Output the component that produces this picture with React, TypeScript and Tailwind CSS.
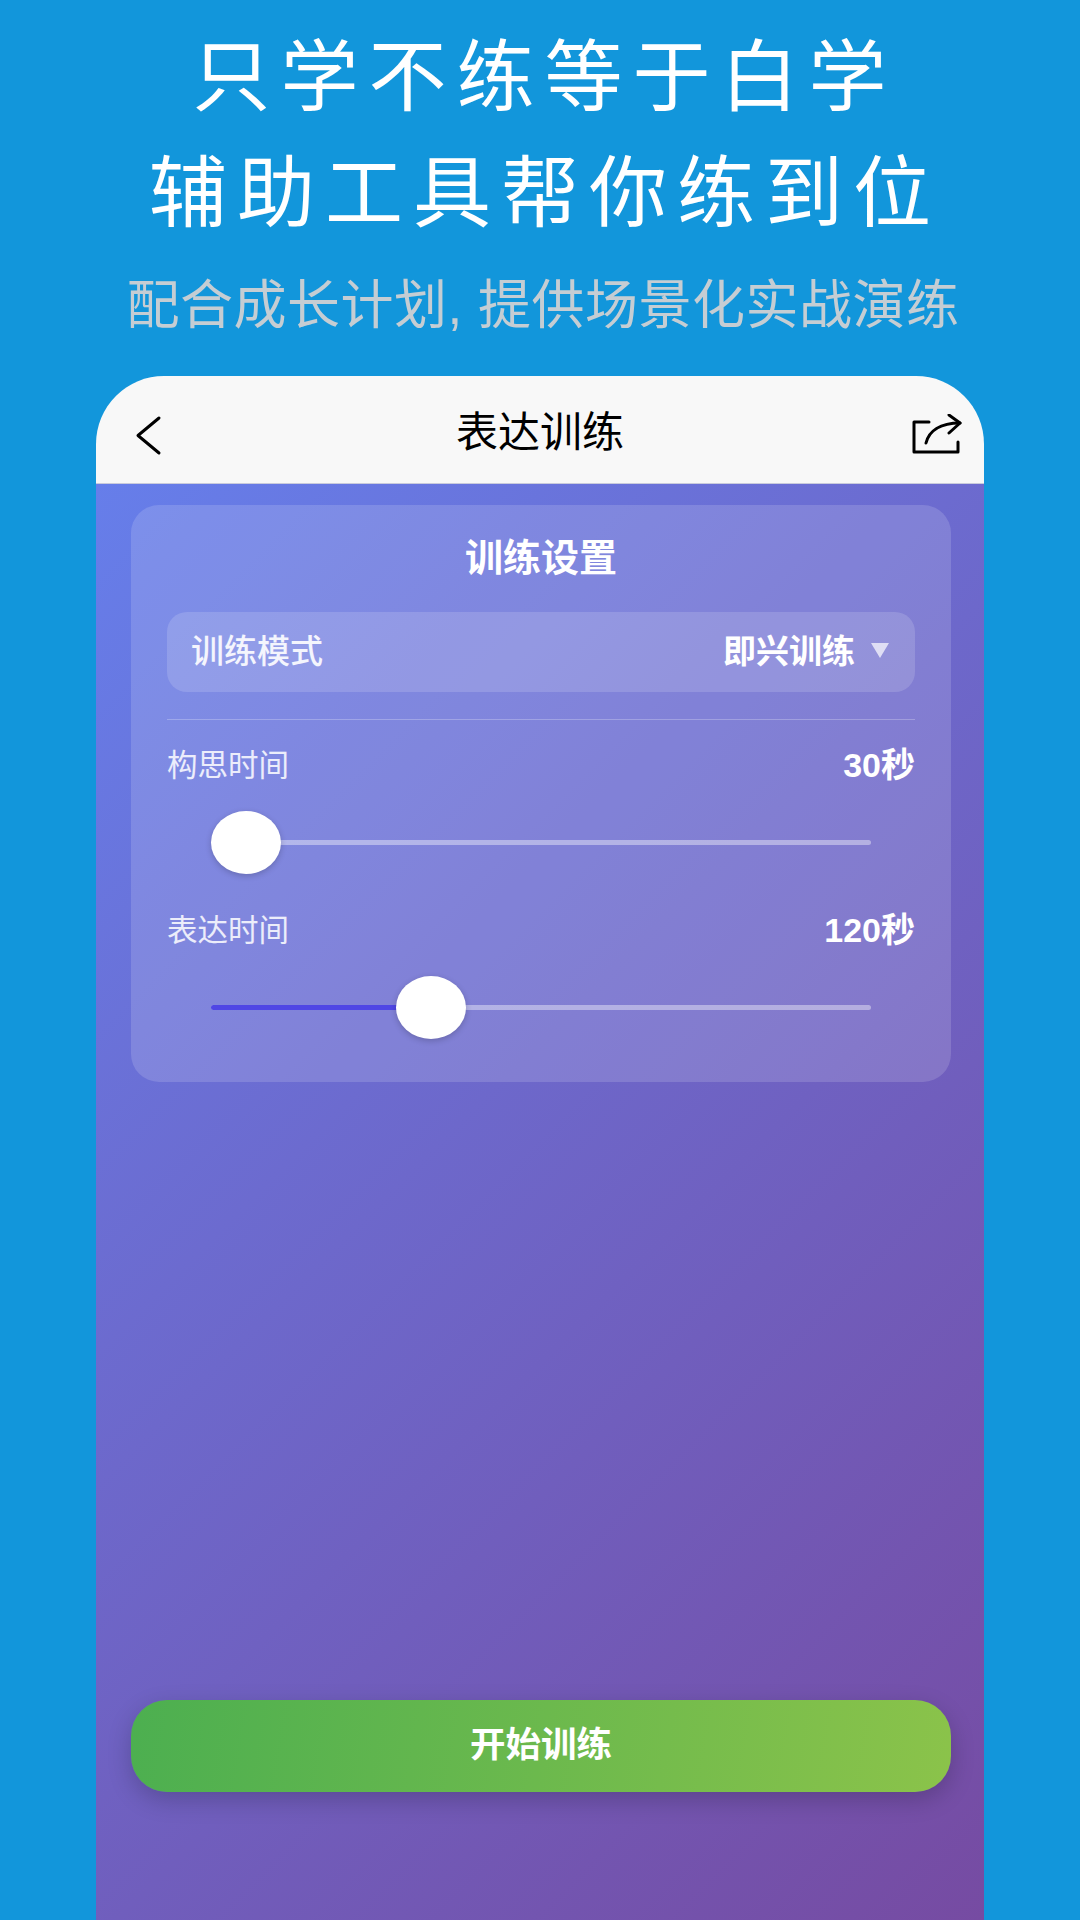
const cjk = "font-['Liberation_Sans','Noto_Sans_CJK_SC',sans-serif]";

function Slider({ label, value, thumbLeft, fill }: { label: string; value: string; thumbLeft: number; fill?: number }) {
  return (
    <div className="flex flex-col">
      <div className="flex h-[40px] items-center justify-between">
        <span className="text-[30.5px] leading-[40px] text-white/85">{label}</span>
        <span className="text-[34px] leading-[40px] font-bold text-white">{value}</span>
      </div>
      <div className="mt-[26px] flex h-[63px] items-center px-[44px]">
        <div className="relative h-[5px] w-full rounded-full bg-white/40">
          {fill ? <div className="h-full rounded-full bg-[#4f46e5]" style={{ width: fill }} /> : null}
          <div
            className="absolute top-[-29px] h-[63px] w-[70px] rounded-[50%] bg-white shadow-[0_2px_6px_rgba(0,0,0,0.2)]"
            style={{ left: thumbLeft }}
          />
        </div>
      </div>
    </div>
  );
}

export default function App() {
  return (
    <div className={`flex h-[1920px] w-[1080px] flex-col overflow-hidden bg-[#1296db] ${cjk}`}>
      <div className="flex h-[376px] flex-col items-center">
        <div className="mt-[28px] h-[116px] pl-[9px] text-[78px] leading-[100px] font-normal tracking-[10px] text-white">只学不练等于白学</div>
        <div className="h-[122px] pl-[10px] text-[78px] leading-[100px] font-normal tracking-[10px] text-white">辅助工具帮你练到位</div>
        <div className="pl-[6px] text-[53px] leading-[80px] tracking-[0.5px] text-[#c5cdd3]">配合成长计划, 提供场景化实战演练</div>
      </div>
      <div className="mx-[96px] flex flex-1 flex-col overflow-hidden rounded-t-[68px]">
        <div className="grid h-[108px] grid-cols-[1fr_auto_1fr] items-center border-b border-[#c9cbdc] bg-[#f8f8f8] px-[22px]">
          <svg width="60" height="60" viewBox="0 0 60 60" fill="none" stroke="#000" strokeWidth="3" strokeLinecap="round" strokeLinejoin="round" className="mt-[10px] ml-[2px]">
            <path d="M39 13 L18 30.5 L39 48" />
          </svg>
          <span className="mt-[6px] text-[42px] leading-[56px] text-black">表达训练</span>
          <svg width="50" height="40" viewBox="0 0 50 40" fill="none" stroke="#000" strokeWidth="3" strokeLinecap="round" strokeLinejoin="round" className="mt-[9px] justify-self-end">
            <path d="M17 8 H2 V38 H46 V28" />
            <path d="M14 29 C17 17 28 9 48 9" />
            <path d="M37 1 L48 9 L37 19" />
          </svg>
        </div>
        <div className="flex flex-1 flex-col bg-[linear-gradient(135deg,#667eea,#764ba2)] pt-[21px] pr-[33px] pl-[35px]">
          <div className="flex h-[577px] flex-col rounded-[28px] bg-white/15 px-[36px] pt-[30px]">
            <div className="text-center text-[38px] leading-[46px] font-bold text-white">训练设置</div>
            <div className="mt-[31px] flex h-[80px] items-center justify-between rounded-[20px] bg-white/15 pr-[26px] pl-[24px]">
              <span className="text-[33px] font-medium text-white/90">训练模式</span>
              <div className="flex items-center gap-[16px]">
                <span className="text-[33px] font-bold text-white">即兴训练</span>
                <div className="mt-[-4px] h-0 w-0 border-x-[9px] border-t-[15px] border-x-transparent border-t-white/70" />
              </div>
            </div>
            <div className="mt-[27px] h-px bg-white/25" />
            <div className="mt-[25px] flex flex-col gap-[36px]">
              <Slider label="构思时间" value="30秒" thumbLeft={0} />
              <Slider label="表达时间" value="120秒" thumbLeft={185} fill={190} />
            </div>
          </div>
          <div className="mt-[618px] flex h-[92px] items-center justify-center rounded-[36px] bg-[linear-gradient(100deg,#4caf50,#8bc34a)] text-[35.5px] font-bold text-white shadow-[0_8px_24px_rgba(0,0,0,0.2)]">
            开始训练
          </div>
        </div>
      </div>
    </div>
  );
}
